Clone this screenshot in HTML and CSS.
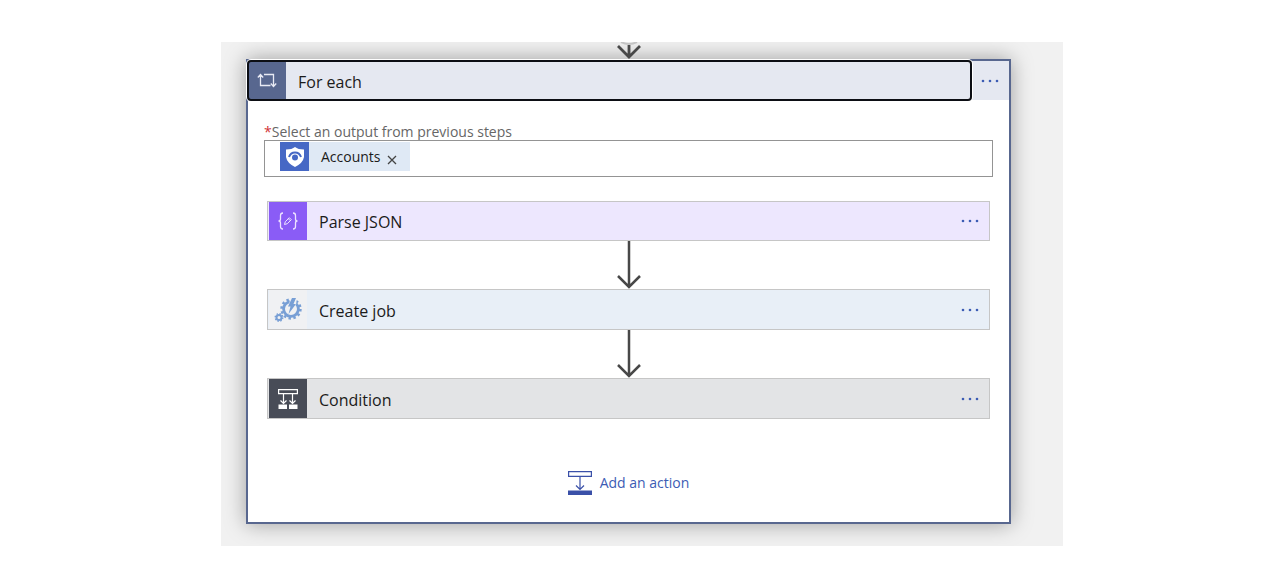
FILE: index.html
```
<!DOCTYPE html>
<html lang="en">
<head>
<meta charset="utf-8">
<title>For each</title>
<link rel="stylesheet" href="styles.css">
</head>
<body>
<main class="canvas">
  <div class="incoming">
    <svg width="26" height="17" viewBox="0 0 26 17"><path d="M5 0Q13 4 21 0" fill="none" stroke="#c4c4c4" stroke-width="2"/><path d="M13 3v12M2 4l11 11L24 4" fill="none" stroke="#484848" stroke-width="2.8"/></svg>
  </div>
  <section class="scope">
    <header class="scope-header">
      <button class="scope-title" type="button">
        <span class="tile tile-loop"><svg width="20" height="16" viewBox="0 0 20 16" fill="none" stroke="#e8eaf4" stroke-width="1.3"><path d="M3.500 1.500v11h10M.8 4.500L3.500 1.500l2.700 3M7 1.500h9.500V13M13.800 10.500l2.700 3 2.700-3"/></svg></span>
        <span class="title-text">For each</span>
      </button>
      <button class="menu" type="button" aria-label="For each menu"><svg width="20" height="4" viewBox="0 0 20 4"><circle cx="3" cy="2" r="1.300"/><circle cx="10" cy="2" r="1.300"/><circle cx="17" cy="2" r="1.300"/></svg></button>
    </header>
    <div class="scope-body">
      <div class="label" id="output-label"><span class="required">*</span>Select an output from previous steps</div>
      <div class="field" role="group" aria-labelledby="output-label">
        <span class="token">
          <span class="token-icon"><svg width="20" height="22" viewBox="0 0 20 22"><path d="M10 1Q13 3.500 19 3.500V11Q18 17 10 21Q2 17 1 11V3.500Q7 3.500 10 1Z" fill="#fff"/><path d="M4 11Q5.500 6.500 10 6.500T16 11" fill="none" stroke="#4668c5" stroke-width="2"/><circle cx="10" cy="11.500" r="3" fill="#4668c5"/></svg></span>
          <span class="token-text">Accounts</span>
          <button class="remove" type="button" aria-label="Remove Accounts"><svg width="10" height="10" viewBox="0 0 10 10"><path d="M1 1l8 8M9 1L1 9" stroke="#444" stroke-width="1.300"/></svg></button>
        </span>
        <input class="field-input" type="text" aria-labelledby="output-label">
      </div>
      <div class="steps">
        <div class="step step-parse">
          <button class="step-title" type="button">
            <span class="tile tile-parse"><svg width="22" height="20" viewBox="0 0 22 20" fill="none" stroke="#eee4ff" stroke-width="1.300"><path d="M6 2Q3.500 2 3.500 4.500V8Q3.500 10 1.500 10Q3.500 10 3.500 12V15.500Q3.500 18 6 18M16 2Q18.500 2 18.500 4.500V8Q18.500 10 20.500 10Q18.500 10 18.500 12V15.500Q18.500 18 16 18"/><path d="M7.500 13.500l.8-2.800 4-4 2 2-4 4zM11.300 7.700l2 2" stroke-width="1"/></svg></span>
            <span class="title-text">Parse JSON</span>
          </button>
          <button class="menu" type="button" aria-label="Parse JSON menu"><svg width="20" height="4" viewBox="0 0 20 4"><circle cx="3" cy="2" r="1.300"/><circle cx="10" cy="2" r="1.300"/><circle cx="17" cy="2" r="1.300"/></svg></button>
        </div>
        <svg class="connector" width="26" height="48" viewBox="0 0 26 48"><path d="M13 0v46M2 35l11 11 11-11"/></svg>
        <div class="step step-job">
          <button class="step-title" type="button">
            <span class="tile tile-job"><svg width="28" height="26" viewBox="0 0 28 26" fill="none" stroke="#789fd5"><circle cx="17" cy="12" r="7.400" stroke-width="2.800"/><circle cx="17" cy="12" r="9.400" stroke-width="2.600" stroke-dasharray="2.400 2.522"/><path d="M16.500 0h6.500l-1 8h-7z" fill="#f0f1f3" stroke="none"/><path d="M18 1h4l-2.500 6H22l-7.500 10 2-7.500H14z" fill="#789fd5" stroke="none"/><circle cx="5" cy="20.500" r="2.500" stroke-width="2"/><circle cx="5" cy="20.500" r="3.800" stroke-width="1.400" stroke-dasharray="1.500 1.485"/></svg></span>
            <span class="title-text">Create job</span>
          </button>
          <button class="menu" type="button" aria-label="Create job menu"><svg width="20" height="4" viewBox="0 0 20 4"><circle cx="3" cy="2" r="1.300"/><circle cx="10" cy="2" r="1.300"/><circle cx="17" cy="2" r="1.300"/></svg></button>
        </div>
        <svg class="connector" width="26" height="48" viewBox="0 0 26 48"><path d="M13 0v46M2 35l11 11 11-11"/></svg>
        <div class="step step-condition">
          <button class="step-title" type="button">
            <span class="tile tile-condition"><svg width="20" height="20" viewBox="0 0 20 20" fill="none" stroke="#fff" stroke-width="1.200"><path d="M.6.6h18.800v4H.6zM5.500 4.500V14M14.500 4.500V14M2.500 11.500l3 3 3-3M11.500 11.500l3 3 3-3"/><path d="M.5 15.500h8.500V20H.5zM11 15.500h8.500V20H11z" fill="#fff" stroke="none"/></svg></span>
            <span class="title-text">Condition</span>
          </button>
          <button class="menu" type="button" aria-label="Condition menu"><svg width="20" height="4" viewBox="0 0 20 4"><circle cx="3" cy="2" r="1.300"/><circle cx="10" cy="2" r="1.300"/><circle cx="17" cy="2" r="1.300"/></svg></button>
        </div>
      </div>
      <button class="add" type="button">
        <svg width="24" height="24" viewBox="0 0 24 24" fill="none" stroke="#3a50a8" stroke-width="1.200"><path d="M.6.6h22.800v4.800H.6zM12 5.400V18M8 14.500l4 4 4-4"/><path d="M0 19.500h24V24H0z" fill="#3a50a8" stroke="none"/></svg>
        <span>Add an action</span>
      </button>
    </div>
  </section>
</main>
</body>
</html>
```
FILE: styles.css
```
* { box-sizing: border-box; }
body {
  margin: 0;
  padding: 42px 24px;
  background: #fff;
  color: #1b1b1b;
  font-family: "Segoe UI", "Open Sans", sans-serif;
}
button {
  margin: 0;
  padding: 0;
  border: 0;
  background: none;
  color: inherit;
  font: inherit;
  cursor: pointer;
}
svg { display: block; flex: none; }
.canvas {
  max-width: 842px;
  margin: 0 auto;
  padding: 0 52px 22px 25px;
  background: #f1f1f1;
  overflow: hidden;
}
.incoming {
  display: flex;
  justify-content: center;
  position: relative;
  z-index: 1;
}
.scope {
  border: 2px solid #58678f;
  background: #fff;
  box-shadow: 0 0 20px rgba(0, 0, 0, 0.35);
}
.scope-header {
  display: flex;
  height: 39px;
  background: #e5e8f1;
  font-size: 16px;
}
.scope-title {
  display: flex;
  flex: 1;
  align-items: center;
  gap: 12px;
  position: relative;
  border-radius: 3px;
  background: #e5e8f1;
  outline: 2px solid #0c0e14;
  outline-offset: -1px;
  box-shadow: 0 0 0 2px #fff;
  text-align: left;
}
.title-text { padding-top: 2px; }
.tile {
  display: flex;
  align-items: center;
  justify-content: center;
  align-self: stretch;
  width: 38px;
}
.tile-loop { background: #58678f; border-radius: 3px 0 0 3px; }
.tile-parse { background: #8a5cf6; }
.tile-job { background: #f0f1f3; }
.tile-condition { background: #484c57; }
.menu {
  display: flex;
  align-items: center;
  justify-content: center;
  width: 38px;
  fill: #3c5cb4;
}
.scope-body {
  display: flex;
  flex-direction: column;
  padding: 24px 16px 27px;
}
.label {
  color: #666;
  font-size: 14px;
  line-height: 16px;
}
.required { color: #d13438; }
.field {
  display: flex;
  height: 37px;
  padding: 1px 15px;
  border: 1px solid #949494;
}
.token {
  display: flex;
  align-items: center;
  height: 29px;
  padding-right: 13px;
  background: #dfe9f5;
  font-size: 14px;
}
.token-icon {
  display: flex;
  align-items: center;
  justify-content: center;
  width: 29px;
  height: 29px;
  background: #4668c5;
}
.token-text { margin: 0 6px 0 12px; }
.remove { padding-top: 7px; }
.field-input {
  flex: 1;
  min-width: 0;
  border: 0;
  outline: 0;
  background: none;
  font: inherit;
}
.steps {
  display: flex;
  flex-direction: column;
  margin: 24px 3px 0;
}
.step {
  display: flex;
  height: 41px;
  padding-left: 1px;
  border: 1px solid #c6c6c6;
  font-size: 16px;
}
.step-parse { height: 40px; background: #ede7fe; }
.step-job { background: #e8eff7; }
.step-condition { background: #e3e4e6; }
.step-title {
  display: flex;
  flex: 1;
  align-items: center;
  gap: 12px;
  text-align: left;
}
.connector {
  align-self: center;
  fill: none;
  stroke: #484848;
  stroke-width: 2.5;
}
.add {
  display: flex;
  align-items: center;
  align-self: center;
  gap: 8px;
  margin-top: 52px;
  color: #3c5cb4;
  font-size: 14px;
  line-height: 24px;
}
```
